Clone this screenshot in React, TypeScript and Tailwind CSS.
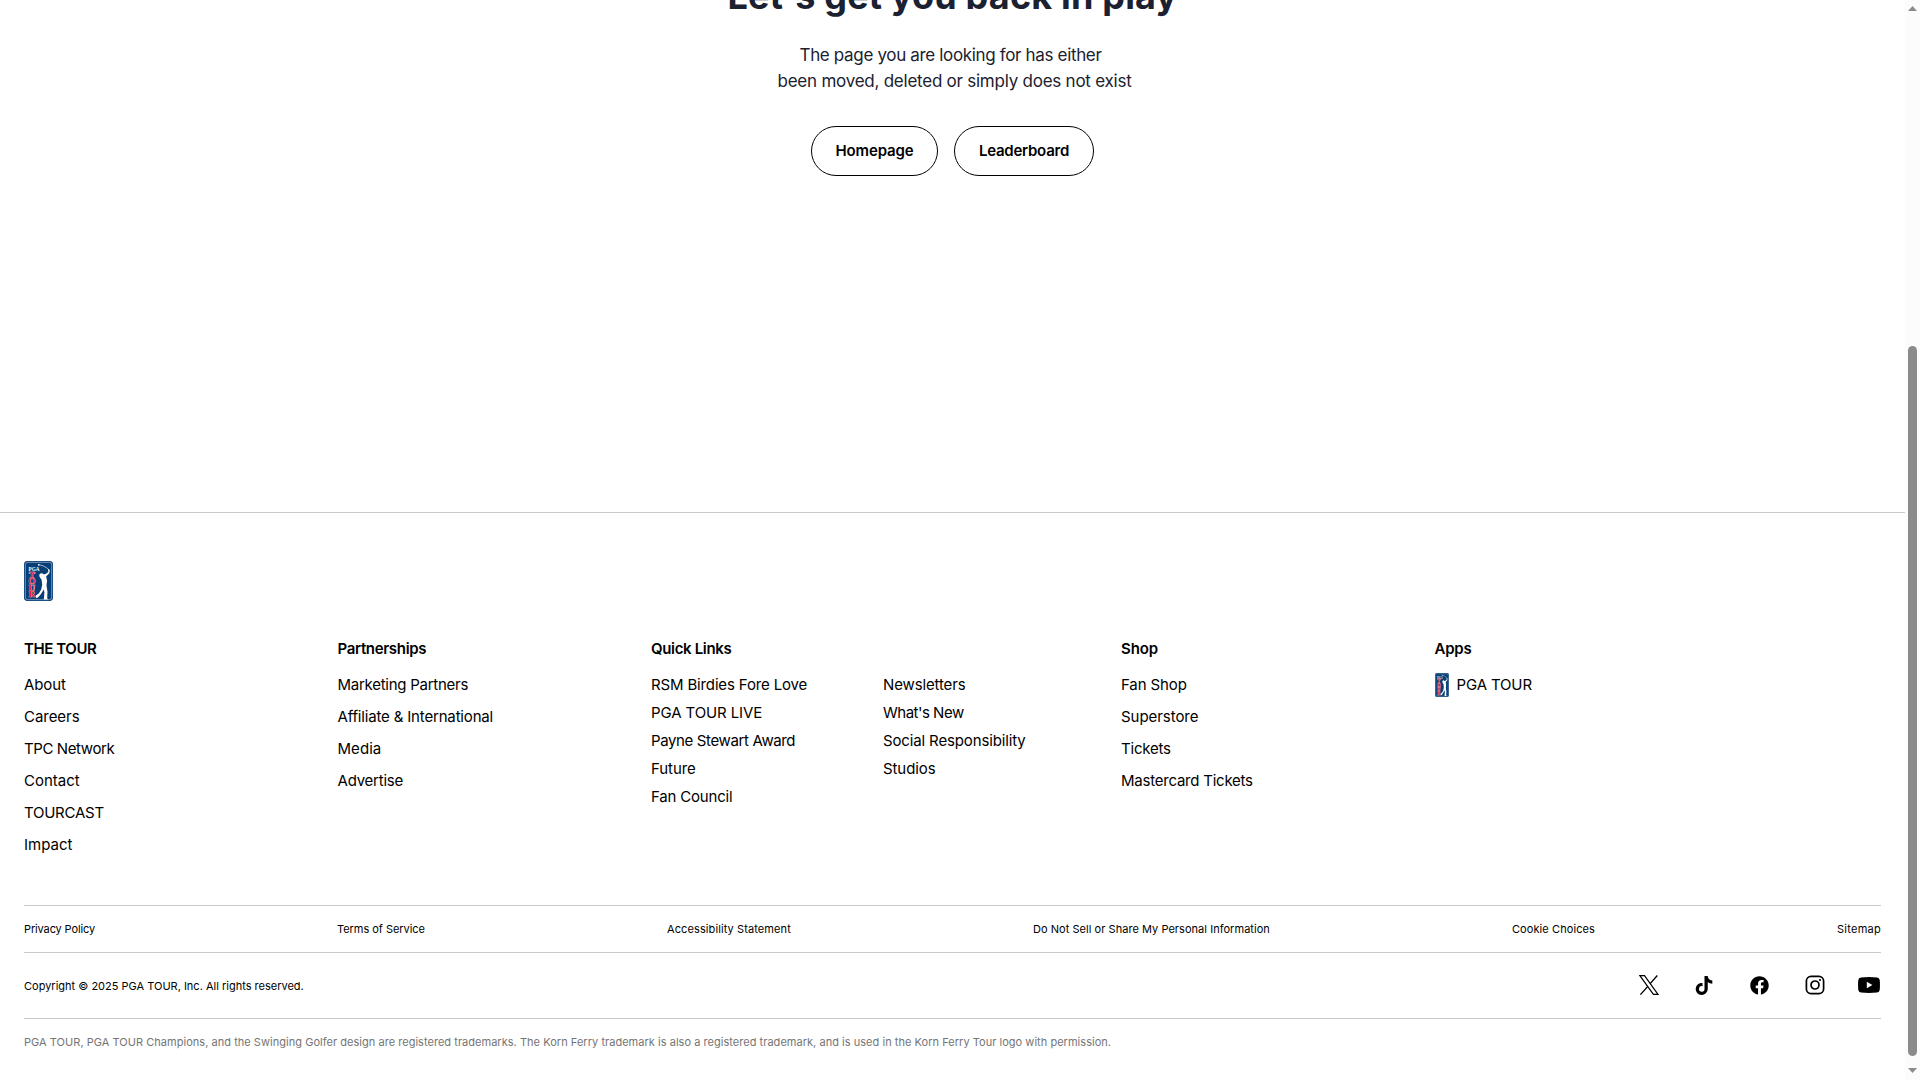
import type { ReactNode } from "react";
import { FaFacebook, FaTiktok } from "react-icons/fa";

type Item = [label: string, tracking: string];

const tour: Item[] = [
  ["About", "tracking-[-0.1px]"],
  ["Careers", "tracking-[-0.04px]"],
  ["TPC Network", "tracking-[-0.4px]"],
  ["Contact", "tracking-[0px]"],
  ["TOURCAST", "tracking-[-0.25px]"],
  ["Impact", "tracking-[0.02px]"],
];
const partnerships: Item[] = [
  ["Marketing Partners", "tracking-[-0.26px]"],
  ["Affiliate & International", "tracking-[-0.17px]"],
  ["Media", "tracking-[0.05px]"],
  ["Advertise", "tracking-[-0.22px]"],
];
const quickA: Item[] = [
  ["RSM Birdies Fore Love", "tracking-[-0.15px]"],
  ["PGA TOUR LIVE", "tracking-[-0.11px]"],
  ["Payne Stewart Award", "tracking-[-0.37px]"],
  ["Future", "tracking-[-0.08px]"],
  ["Fan Council", "tracking-[-0.19px]"],
];
const quickB: Item[] = [
  ["Newsletters", "tracking-[-0.14px]"],
  ["What's New", "tracking-[-0.5px]"],
  ["Social Responsibility", "tracking-[-0.14px]"],
  ["Studios", "tracking-[-0.08px]"],
];
const shop: Item[] = [
  ["Fan Shop", "tracking-[-0.12px]"],
  ["Superstore", "tracking-[-0.05px]"],
  ["Tickets", "tracking-[-0.2px]"],
  ["Mastercard Tickets", "tracking-[-0.23px]"],
];
const legal: Item[] = [
  ["Privacy Policy", "tracking-[-0.13px]"],
  ["Terms of Service", "tracking-[-0.04px]"],
  ["Accessibility Statement", "tracking-[0.1px]"],
  ["Do Not Sell or Share My Personal Information", "tracking-[0.044px]"],
  ["Cookie Choices", "tracking-[0.09px]"],
  ["Sitemap", "tracking-[0.26px]"],
];

function Badge({ className }: { className: string }) {
  return (
    <svg viewBox="0 0 29 40" preserveAspectRatio="none" className={className} aria-label="PGA TOUR">
      <rect width="29" height="40" rx="3.4" fill="#063e75" />
      <rect x="1.3" y="1.3" width="26.4" height="37.4" rx="2.4" fill="none" stroke="#a9bfd6" strokeWidth="0.7" />
      <g fontFamily="Liberation Serif, serif" fontWeight="700" textAnchor="middle">
        <text x="10" y="9.8" fontSize="5.2" textLength="11" lengthAdjust="spacingAndGlyphs" fill="#fff">PGA</text>
        <g fontSize="8.8" fill="#e8112d" stroke="#f3c9d0" strokeWidth="0.7" paintOrder="stroke">
          <text x="8" y="17">T</text>
          <text x="8" y="23.3">O</text>
          <text x="8" y="29.6">U</text>
          <text x="8" y="35.9">R</text>
        </g>
      </g>
      <path d="M14.3 3.8C17 4 21 5 25 8.8" fill="none" stroke="#e8eef5" strokeWidth="0.7" />
      <circle cx="14.8" cy="3.9" r="0.8" fill="#fff" />
      <path
        fill="#fff"
        d="M24 8l1.8 1-.5 3.2-3.2 3.3 1 4.2-.6 4.6 1 6.5-.3 6.4.8 1.2h-4.2l.6-6.8-.6-3-3 4.6-2.6 3-1.8 1-.6-1.4 0-1.4 3-2 2.4-3.8 1-4.8-.6-5-2-2.8-.4-2.2 1.2-1.4 1.8-.2 1.2 1 2.3-.3 2.6-1.9z"
      />
    </svg>
  );
}

function Links({ items, gap }: { items: Item[]; gap: string }) {
  return (
    <ul className={`flex flex-col ${gap}`}>
      {items.map(([label, tracking]) => (
        <li key={label} className={`text-[15px] leading-5 whitespace-nowrap ${tracking}`}>{label}</li>
      ))}
    </ul>
  );
}

function Column({ title, tracking, width, children }: { title: string; tracking: string; width: string; children: ReactNode }) {
  return (
    <section className={`shrink-0 ${width}`}>
      <h2 className={`mb-4 text-[15px] leading-5 font-semibold ${tracking}`}>{title}</h2>
      {children}
    </section>
  );
}

function Scrollbar() {
  return (
    <div className="flex h-full w-[15px] shrink-0 flex-col items-center bg-[#fcfcfc] pt-1.5 pb-[7px]">
      <svg width="9" height="5" viewBox="0 0 9 5" fill="#8b8b8b"><path d="M0 5L4.5 0L9 5z" /></svg>
      <div className="mt-[335px] h-[710px] w-[9px] rounded-full bg-[#8b8b8b]" />
      <svg className="mt-auto" width="9" height="5" viewBox="0 0 9 5" fill="#8b8b8b"><path d="M0 0L4.5 5L9 0z" /></svg>
    </div>
  );
}

export default function App() {
  return (
    <div className="flex h-[1080px] w-[1920px] overflow-hidden bg-white font-['Inter',sans-serif] text-black">
      <div className="flex w-[1905px] flex-col">
        <main className="flex h-[512px] shrink-0 flex-col items-center overflow-hidden text-[#1b2130]">
          <h1 className="-mt-[22px] h-9 text-4xl leading-9 font-bold tracking-[0.18px] whitespace-nowrap">Let's get you back in play</h1>
          <div className="mt-7 flex flex-col items-center text-[17px] leading-[26px] whitespace-nowrap">
            <p className="mr-1 tracking-[-0.34px]">The page you are looking for has either</p>
            <p className="ml-1 tracking-[-0.24px]">been moved, deleted or simply does not exist</p>
          </div>
          <div className="mt-8 flex gap-4 text-[15px] font-semibold text-black">
            <button className="h-[50px] w-[127px] rounded-full border border-black tracking-[-0.13px]">Homepage</button>
            <button className="h-[50px] w-[140px] rounded-full border border-black tracking-[-0.25px]">Leaderboard</button>
          </div>
        </main>

        <footer className="border-t border-[#c9c9c9] pr-6 pl-6">
          <Badge className="mt-12 h-10 w-[29px]" />
          <div className="mt-[38px] flex h-[266px]">
            <Column title="THE TOUR" tracking="tracking-[-0.42px]" width="w-[313.5px]">
              <Links items={tour} gap="gap-3" />
            </Column>
            <Column title="Partnerships" tracking="tracking-[-0.33px]" width="w-[313.5px]">
              <Links items={partnerships} gap="gap-3" />
            </Column>
            <Column title="Quick Links" tracking="tracking-[-0.34px]" width="w-[470px]">
              <div className="flex">
                <div className="w-[232px]"><Links items={quickA} gap="gap-2" /></div>
                <Links items={quickB} gap="gap-2" />
              </div>
            </Column>
            <Column title="Shop" tracking="tracking-[-0.11px]" width="w-[313.5px]">
              <Links items={shop} gap="gap-3" />
            </Column>
            <Column title="Apps" tracking="tracking-[-0.22px]" width="w-[313.5px]">
              <div className="-my-0.5 flex items-center gap-2">
                <Badge className="h-6 w-3.5" />
                <span className="text-[15px] leading-5 tracking-[-0.14px]">PGA TOUR</span>
              </div>
            </Column>
          </div>

          <nav className="flex h-12 w-[1857px] items-center justify-between border-y border-[#c9c9c9] text-[11px] whitespace-nowrap">
            {legal.map(([label, tracking]) => (
              <span key={label} className={tracking}>{label}</span>
            ))}
          </nav>

          <div className="flex h-[66px] w-[1857px] items-center justify-between border-b border-[#c9c9c9]">
            <span className="pt-0.5 text-[11px]">Copyright © 2025 PGA TOUR, Inc. All rights reserved.</span>
            <div className="flex items-center pb-px">
              <svg className="mr-9" width="20" height="20" viewBox="0 0 20 20" fill="none" stroke="#000">
                <path d="M.9.7H5.5L19 19.3H14.4z" strokeWidth="1.2" />
                <path d="M18.3.5L11.2 8.6M8.6 11.6L1.4 19.6" strokeWidth="1.4" />
              </svg>
              <FaTiktok className="mr-[37px] h-[19px] w-[18px]" />
              <FaFacebook className="mr-9 size-[19px]" />
              <svg className="mr-[33px]" width="20" height="20" viewBox="0 0 20 20" fill="none" stroke="#000">
                <rect x="1.4" y="1.4" width="17.2" height="17.2" rx="4.6" strokeWidth="1.7" />
                <circle cx="10" cy="10" r="4" strokeWidth="1.7" />
                <circle cx="15" cy="5" r="1.1" fill="#000" stroke="none" />
              </svg>
              <svg className="mr-px" width="22" height="16" viewBox="0 0 22 16">
                <path d="M3 .4Q11-.3 19 .4 21.4.7 21.7 3 22.2 8 21.7 13 21.4 15.3 19 15.6 11 16.3 3 15.6.6 15.3.3 13-.2 8 .3 3 .6.7 3 .4zM8.8 4.7V11.3L14.4 8z" />
              </svg>
            </div>
          </div>
          <p className="mt-[15px] text-[11px] leading-4 tracking-[0.033px] whitespace-nowrap text-[#757575]">
            PGA TOUR, PGA TOUR Champions, and the Swinging Golfer design are registered trademarks. The Korn Ferry trademark is also a registered trademark, and is used in the Korn Ferry Tour logo with permission.
          </p>
        </footer>
      </div>
      <Scrollbar />
    </div>
  );
}
